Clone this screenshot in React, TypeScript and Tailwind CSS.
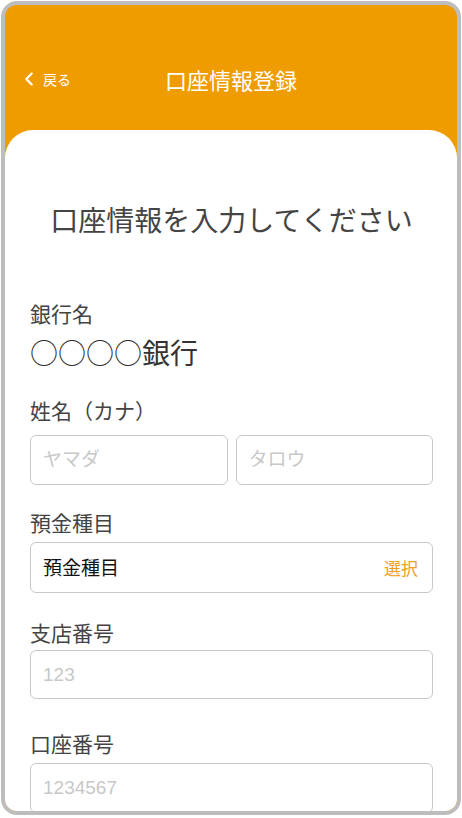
import { ChevronLeft } from "lucide-react";

const Label = ({ text, className = "" }: { text: string; className?: string }) => (
  <p className={`text-[21px] leading-[30px] text-[#444] ${className}`}>{text}</p>
);

const TextField = ({ placeholder, className = "" }: { placeholder: string; className?: string }) => (
  <input
    readOnly
    placeholder={placeholder}
    className={`block w-full min-w-0 rounded-[6px] border border-[#c8c8c8] bg-white px-[12px] font-['Liberation_Sans','Noto_Sans_CJK_JP',sans-serif] text-[19px] text-[#222] outline-none placeholder:text-[#c8c8c8] ${className}`}
  />
);

export default function App() {
  return (
    <main className="h-[818px] w-[462px] bg-white pl-px pt-px font-['Noto_Sans_CJK_JP','Noto_Sans',sans-serif]">
      <div className="flex h-[814px] w-[460px] flex-col overflow-hidden rounded-[16px] border-4 border-[#bdbdbd] bg-[#ee9c00]">
        <Header />
        <AccountForm />
      </div>
    </main>
  );
}

const Header = () => {
  return (
    <header className="relative h-[125px] shrink-0">
      <div className="mt-[60px] flex h-[28px] items-center justify-center">
        <h1 className="text-[22px] text-white">口座情報登録</h1>
      </div>
      <button className="absolute left-[13px] top-[60px] flex h-[28px] items-center gap-[3px] text-white">
        <ChevronLeft className="h-[22px] w-[22px]" strokeWidth={2.4} />
        <span className="text-[14px]">戻る</span>
      </button>
    </header>
  );
};

const AccountForm = () => {
  return (
    <section className="flex-1 rounded-t-[28px] bg-white pl-[25px] pr-[24px]">
      <h2 className="mt-[71px] text-center text-[28px] leading-[36px] text-[#444]">口座情報を入力してください</h2>

      <Label text="銀行名" className="mt-[61px]" />
      <p className="mt-[6px] text-[28px] leading-[36px] text-[#333]">○○○○銀行</p>

      <Label text="姓名（カナ）" className="mt-[25px]" />
      <div className="mt-[10px] grid grid-cols-2 gap-[8px]">
        <TextField placeholder="ヤマダ" className="h-[50px]" />
        <TextField placeholder="タロウ" className="h-[50px]" />
      </div>

      <Label text="預金種目" className="mt-[22px]" />
      <div className="mt-[5px] flex h-[51px] items-center justify-between rounded-[6px] border border-[#c8c8c8] pl-[12px] pr-[14px]">
        <span className="text-[19px] text-[#111]">預金種目</span>
        <span className="text-[17px] text-[#f0a020]">選択</span>
      </div>

      <Label text="支店番号" className="mt-[24px]" />
      <TextField placeholder="123" className="mt-[3px] h-[49px]" />

      <Label text="口座番号" className="mt-[29px]" />
      <TextField placeholder="1234567" className="mt-[5px] h-[50px]" />
    </section>
  );
};
